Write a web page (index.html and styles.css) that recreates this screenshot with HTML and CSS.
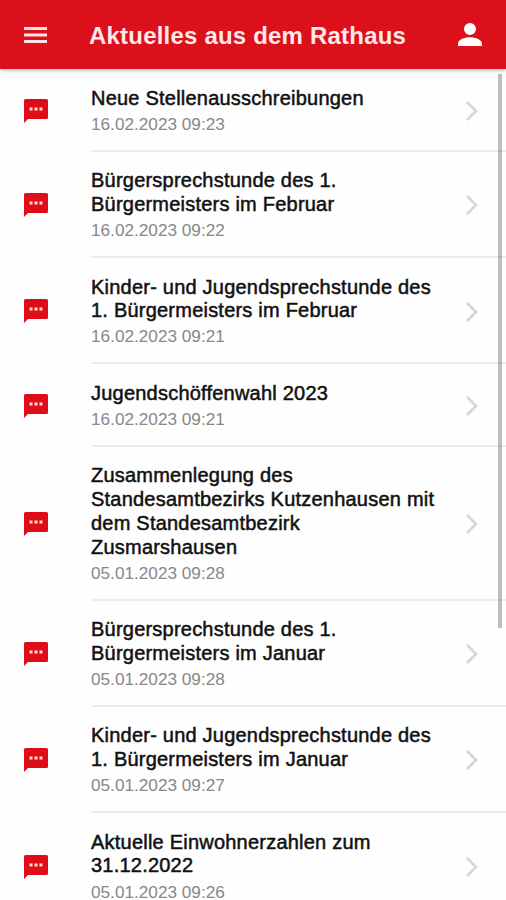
FILE: index.html
```html
<!DOCTYPE html>
<html lang="de">
<head>
    <meta charset="UTF-8">
    <meta name="viewport" content="width=device-width, initial-scale=1.0">
    <title>Aktuelles aus dem Rathaus</title>
    <link rel="stylesheet" href="styles.css">
</head>
<body>
    <!-- Shared icons -->
    <svg width="0" height="0" class="sprite">
        <symbol id="message" viewBox="0 0 24 24">
            <path fill="#df0d17" d="M1.5 0h21Q24 0 24 1.500V18.500Q24 20 22.500 20H4L0 24V1.500Q0 0 1.500 0z"/>
            <path fill="#ffdcdc" d="M5.500 8.500h3v3h-3zM10.500 8.500h3v3h-3zM15.500 8.500h3v3h-3z"/>
        </symbol>
        <symbol id="chevron" viewBox="0 0 12 20">
            <path fill="none" stroke="#d6d6d6" stroke-width="2.500" d="M1 1l9 9-9 9"/>
        </symbol>
    </svg>

    <header class="toolbar">
        <svg class="menu" viewBox="0 0 23 16"><path fill="#ffe1e1" d="M0 0h23v3H0zM0 6.500h23v3H0zM0 13h23v3H0z"/></svg>
        <h1>Aktuelles aus dem Rathaus</h1>
        <svg class="user" viewBox="0 0 24 24"><path fill="#fff" d="M12 12a6 6 0 1 0 0-12 6 6 0 0 0 0 12zM0 23v-2.500C0 17 6 14.300 12 14.300S24 17 24 20.500V23z"/></svg>
    </header>

    <main class="list">
        <article class="item">
            <svg class="message"><use href="#message"/></svg>
            <div class="content">
                <div class="text"><h2>Neue Stellenausschreibungen</h2><p>16.02.2023 09:23</p></div>
                <svg class="chevron"><use href="#chevron"/></svg>
            </div>
        </article>
        <article class="item">
            <svg class="message"><use href="#message"/></svg>
            <div class="content">
                <div class="text"><h2>Bürgersprechstunde des 1.<br>Bürgermeisters im Februar</h2><p>16.02.2023 09:22</p></div>
                <svg class="chevron"><use href="#chevron"/></svg>
            </div>
        </article>
        <article class="item">
            <svg class="message"><use href="#message"/></svg>
            <div class="content">
                <div class="text"><h2>Kinder- und Jugendsprechstunde des<br>1. Bürgermeisters im Februar</h2><p>16.02.2023 09:21</p></div>
                <svg class="chevron"><use href="#chevron"/></svg>
            </div>
        </article>
        <article class="item">
            <svg class="message"><use href="#message"/></svg>
            <div class="content">
                <div class="text"><h2>Jugendschöffenwahl 2023</h2><p>16.02.2023 09:21</p></div>
                <svg class="chevron"><use href="#chevron"/></svg>
            </div>
        </article>
        <article class="item">
            <svg class="message"><use href="#message"/></svg>
            <div class="content">
                <div class="text"><h2>Zusammenlegung des<br>Standesamtbezirks Kutzenhausen mit<br>dem Standesamtbezirk<br>Zusmarshausen</h2><p>05.01.2023 09:28</p></div>
                <svg class="chevron"><use href="#chevron"/></svg>
            </div>
        </article>
        <article class="item">
            <svg class="message"><use href="#message"/></svg>
            <div class="content">
                <div class="text"><h2>Bürgersprechstunde des 1.<br>Bürgermeisters im Januar</h2><p>05.01.2023 09:28</p></div>
                <svg class="chevron"><use href="#chevron"/></svg>
            </div>
        </article>
        <article class="item">
            <svg class="message"><use href="#message"/></svg>
            <div class="content">
                <div class="text"><h2>Kinder- und Jugendsprechstunde des<br>1. Bürgermeisters im Januar</h2><p>05.01.2023 09:27</p></div>
                <svg class="chevron"><use href="#chevron"/></svg>
            </div>
        </article>
        <article class="item">
            <svg class="message"><use href="#message"/></svg>
            <div class="content">
                <div class="text"><h2>Aktuelle Einwohnerzahlen zum<br>31.12.2022</h2><p>05.01.2023 09:26</p></div>
                <svg class="chevron"><use href="#chevron"/></svg>
            </div>
        </article>
    </main>
    <div class="scrollbar"></div>
</body>
</html>
```

FILE: styles.css
```css
/* Global Styles */
* {
    box-sizing: border-box;
}
body {
    font-family: "Liberation Sans", Arial, sans-serif;
    background-color: #fefefe;
    margin: 0;
    height: 900px;
    overflow: hidden;
    display: flex;
    flex-direction: column;
}
h1, h2, p {
    margin: 0;
    white-space: nowrap;
}
svg {
    display: block;
    flex-shrink: 0;
}
.sprite {
    position: absolute;
}

/* Toolbar */
.toolbar {
    height: 69px;
    flex-shrink: 0;
    display: flex;
    align-items: center;
    padding: 1px 24px 0 24px;
    background-color: #db101a;
    box-shadow: 0 1px 4px rgba(0, 0, 0, 0.35);
    z-index: 1;
}
.toolbar h1 {
    flex: 1;
    margin-left: 42px;
    padding-top: 2px;
    color: #ffe9e9;
    font-size: 24px;
    font-weight: bold;
    letter-spacing: 0.2px;
}
.menu {
    width: 23px;
    height: 16px;
}
.user {
    width: 24px;
    height: 24px;
}

/* News list */
.list {
    flex: 1;
    min-height: 0;
    padding-top: 0.4px;
}
.item {
    display: flex;
    align-items: center;
    padding-left: 24px;
}
.message {
    width: 24px;
    height: 24px;
}
.content {
    flex: 1;
    display: flex;
    align-items: center;
    justify-content: space-between;
    margin-left: 43px;
    padding: 17.3px 28px 14.9px 0;
    border-bottom: 2px solid #ededed;
}
.text h2 {
    color: #111;
    font-size: 20px;
    font-weight: normal;
    line-height: 23.75px;
    letter-spacing: 0.22px;
    -webkit-text-stroke: 0.5px #111;
}
.text p {
    margin-top: 2.4px;
    color: #888;
    font-size: 17.2px;
    line-height: 22.2px;
}
.chevron {
    width: 12px;
    height: 20px;
}

/* Scroll indicator */
.scrollbar {
    position: absolute;
    top: 74px;
    right: 4px;
    width: 4px;
    height: 554px;
    background-color: rgba(0, 0, 0, 0.25);
}
```
